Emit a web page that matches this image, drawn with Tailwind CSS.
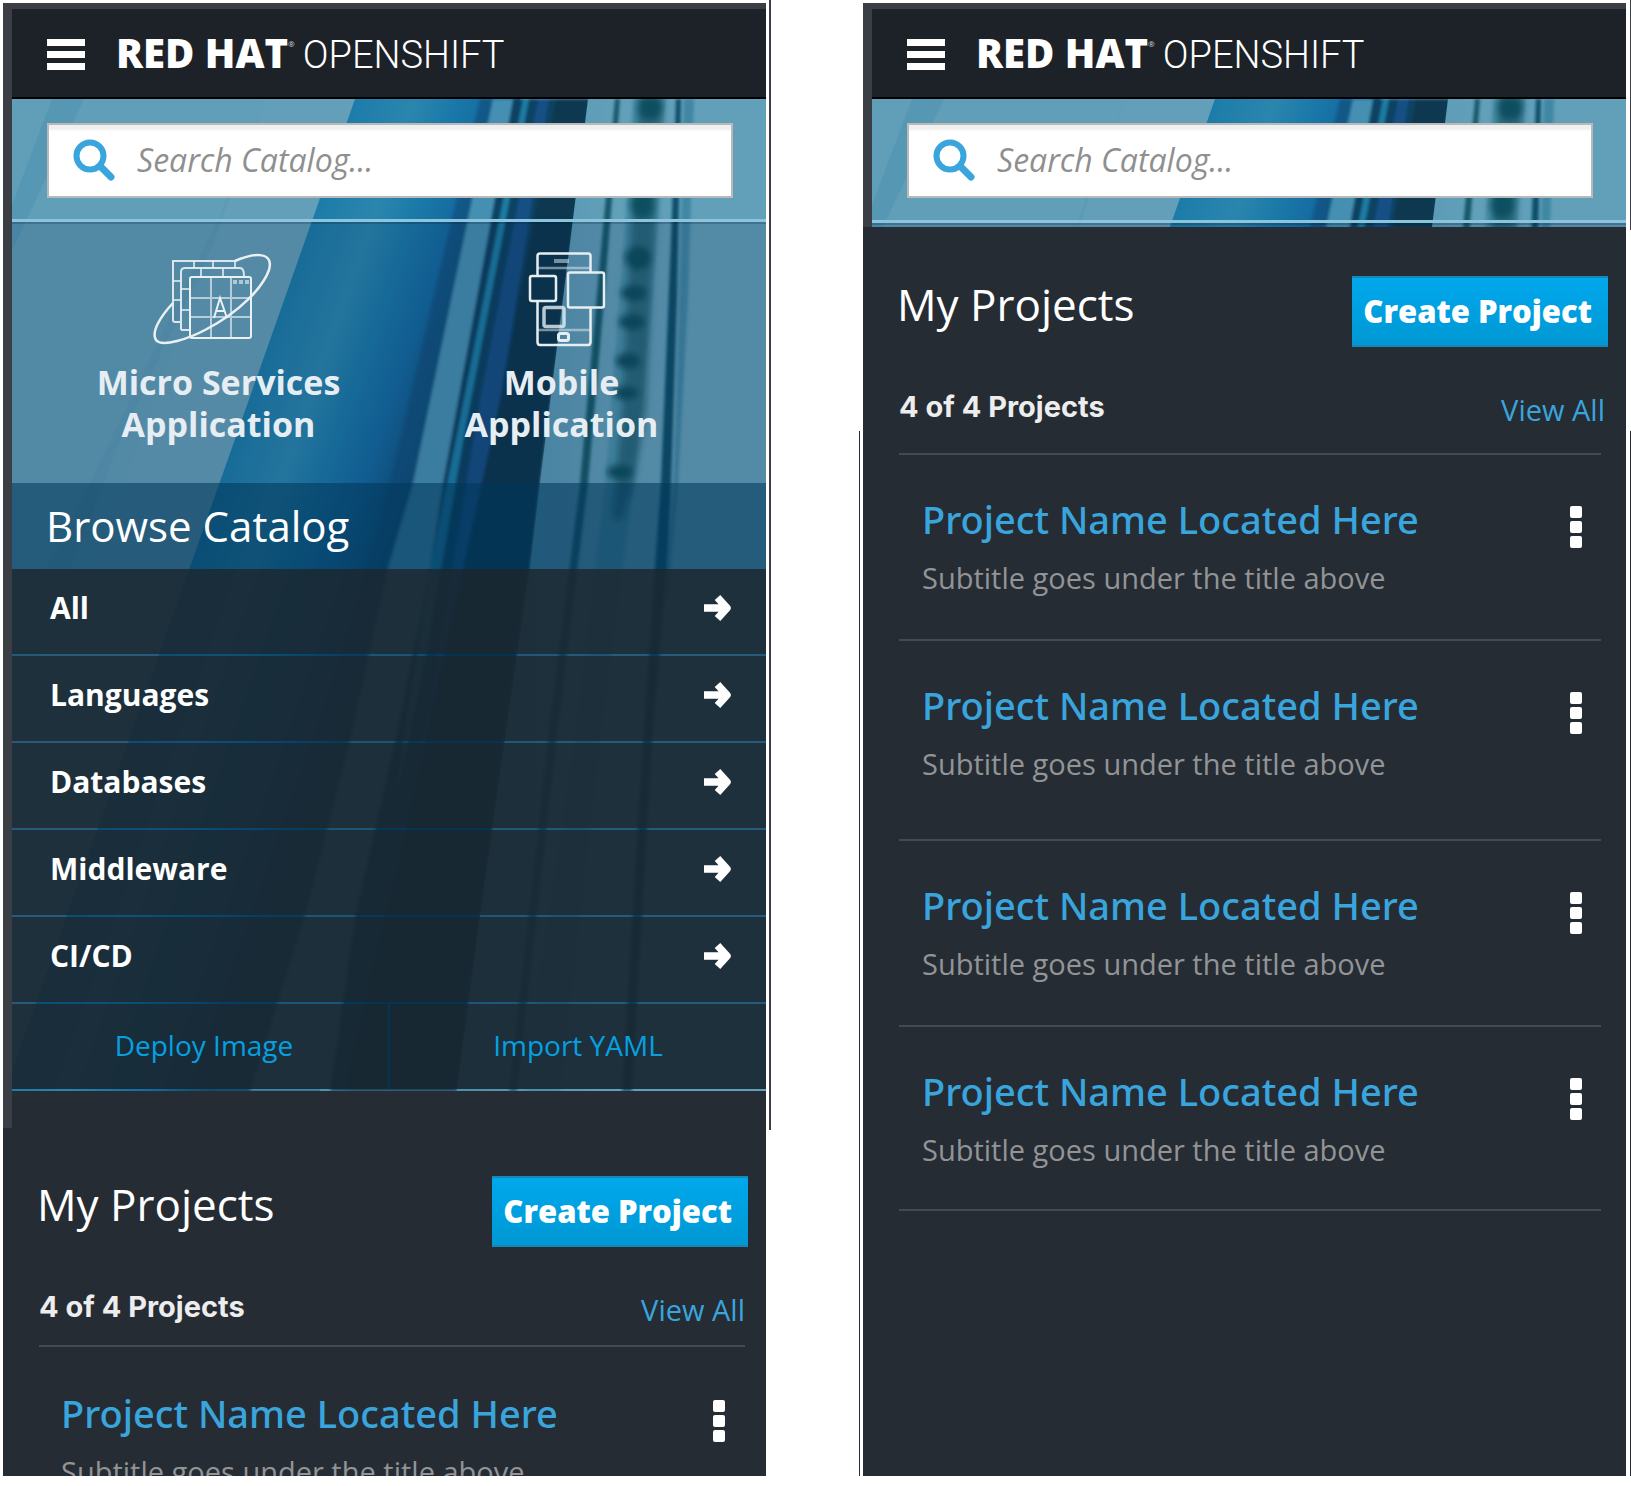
<!DOCTYPE html>
<html lang="en">
<head>
<meta charset="utf-8">
<meta name="viewport" content="width=device-width, initial-scale=1">
<title>Red Hat OpenShift</title>
<script src="https://cdn.jsdelivr.net/npm/@tailwindcss/browser@4"></script>
</head>
<body class="bg-white font-['Open_Sans',sans-serif]">

<!-- Shared artwork -->
<svg class="absolute size-0" aria-hidden="true">
  <defs>
    <linearGradient id="panel" gradientUnits="userSpaceOnUse" x1="355" y1="99" x2="535" y2="162">
      <stop offset="0" stop-color="#1c7ca9"/><stop offset=".3" stop-color="#2b86ae"/><stop offset=".5" stop-color="#1a79a8"/><stop offset=".7" stop-color="#156aa1"/><stop offset="1" stop-color="#0f4c70"/>
    </linearGradient>
    <linearGradient id="haze" x1="0" y1="0" x2="1" y2="0">
      <stop offset="0" stop-color="#4a90b0"/><stop offset=".5" stop-color="#629fb9"/><stop offset="1" stop-color="#629fb9"/>
    </linearGradient>
    <filter id="soft" x="-20%" y="-5%" width="140%" height="110%"><feGaussianBlur stdDeviation="1.5"/></filter>
    <filter id="softer" x="-50%" y="-5%" width="200%" height="110%"><feGaussianBlur stdDeviation="3"/></filter>
    <symbol id="backdrop" viewBox="12 99 754 992" preserveAspectRatio="none">
      <rect x="12" y="99" width="754" height="992" fill="#619eb8"/>
      <path d="M52 99H84L12 250V205Z" fill="#5698b4"/>
      <path d="M265 99H355L5 1091H-100Z" fill="#649fb9"/>
      <path d="M265 99L220 215L90 483L-20 700H20L120 440L215 240Z" fill="#4f92ae" opacity=".25"/>
      <path d="M355 99H520L320 1091H5Z" fill="url(#panel)"/>
      <g filter="url(#soft)">
        <path d="M480 99H496L413 483L388 568L350 741L305 916L250 1091H215L320 741L390 483Z" fill="#0f4f7c" opacity=".7"/>
        <path d="M493 99H515L443 483L430 568L395 741L355 916L330 1091H250L305 916L350 741L388 568L413 483Z" fill="#4490b2"/>
        <path d="M513 99H592L540 483L530 568L505 741L480 916L457 1091H330L355 916L395 741L430 568L443 483Z" fill="#0f4262"/>
        <path d="M523 99H529L465 430L425 660L395 800L430 568L458 430Z" fill="#1f7da5"/>
        <path d="M538 99H549L500 400L440 700L400 916H385L430 700L480 400Z" fill="#125084"/>
        <path d="M556 99H588L540 483L505 741L457 1091H345L425 741L500 400Z" fill="#0b394f"/>
      </g>
      <path d="M588 99H766V1091H457L480 916L505 741L530 568L540 483Z" fill="url(#haze)"/>
      <g filter="url(#soft)">
        <path d="M615 99H620L604 300L588 483L556 741L517 1091H509L548 741L580 483L600 260Z" fill="#155a6c"/>
        <path d="M633 99H665L652 300L634 483L600 741L560 1091H525L575 741L605 483L624 240Z" fill="#3b87a0" opacity=".6"/>
        <path d="M676 99H681L677 300L671 483L667 568L652 741L632 1091H622L643 741L655 568L661 483L671 240Z" fill="#10506a"/>
        <path d="M684 99H694L688 300L678 483L668 600H664L674 483L681 240Z" fill="#3f87a4"/>
      </g>
      <g filter="url(#softer)" fill="#105060">
        <path d="M638 95H664L654 260L652 280L646 410L634 483L622 520H612L622 410L630 240Z" opacity=".6"/>
        <ellipse cx="638" cy="258" rx="13" ry="12"/><ellipse cx="634" cy="293" rx="13" ry="8"/><ellipse cx="632" cy="322" rx="13" ry="8"/>
        <ellipse cx="628" cy="361" rx="12" ry="8"/><ellipse cx="626" cy="393" rx="12" ry="7"/><ellipse cx="620" cy="472" rx="13" ry="7"/><ellipse cx="650" cy="108" rx="13" ry="12"/><ellipse cx="642" cy="205" rx="12" ry="14"/>
      </g>
    </symbol>
    <symbol id="magnifier" viewBox="0 0 44 44">
      <circle cx="17" cy="17" r="13.5" fill="none" stroke="#39a5dc" stroke-width="6"/>
      <path d="M27 27L38 38" stroke="#39a5dc" stroke-width="7" stroke-linecap="round"/>
    </symbol>
    <symbol id="arrow" viewBox="0 0 28 30">
      <path d="M1 15H23M14.500 4.500L24 15L14.500 25.500" fill="none" stroke="#fff" stroke-width="7.500" stroke-linejoin="round"/>
    </symbol>
    <symbol id="kebab" viewBox="0 0 12 42">
      <g fill="#fff"><rect width="12" height="12" rx="2"/><rect y="15" width="12" height="12" rx="2"/><rect y="30" width="12" height="12" rx="2"/></g>
    </symbol>
  </defs>
</svg>

<div class="grid h-screen grid-cols-2 gap-x-[97px] pt-[3px] pr-[5px] pb-[10px] pl-[3px]">

  <!-- Catalog screen -->
  <main class="relative min-h-0">
    <div class="absolute -top-[3px] -right-[5px] h-[1130px] w-0.5 bg-[#3c4046]"></div>
    <div class="h-full overflow-hidden bg-[#262c34]">
      <div class="bg-[#3b3f45] pt-[6px] pl-[9px]">
        <header class="flex h-[90px] items-center border-b-2 border-black bg-[#1d2128] pt-0.5 pl-[35px]">
          <button class="flex w-[38px] flex-col gap-[5px]" aria-label="Menu">
            <span class="h-[7px] bg-white"></span><span class="h-[7px] bg-white"></span><span class="h-[7px] bg-white"></span>
          </button>
          <a href="#" class="ml-[31px] flex items-baseline text-white">
            <span class="text-[40px] leading-[44px] font-extrabold">RED HAT</span>
            <span class="self-start text-[8px] leading-[26px] text-gray-300">®</span>
            <span class="ml-2 font-['Roboto',sans-serif] text-[38px] leading-[44px] font-light">OPENSHIFT</span>
          </a>
        </header>
        <div class="relative isolate overflow-hidden pb-0.5">
          <svg class="absolute inset-0 -z-10 h-[992px] w-full" aria-hidden="true"><use href="#backdrop"/></svg>
          <form class="border-b-[3px] border-[#8bc5dc] pt-6 pr-[33px] pb-[21px] pl-[35px]">
            <label class="flex h-[75px] items-center border-2 border-[#b9b9b9] bg-white pl-6 shadow-[inset_0_6px_2px_-1px_#f0f0f0]">
              <svg class="size-[44px]" aria-hidden="true"><use href="#magnifier"/></svg>
              <input type="text" aria-label="Search catalog" placeholder="Search Catalog..." class="ml-5 min-w-0 flex-1 pb-0.5 text-[32px] leading-[44px] italic outline-none placeholder:text-[#8f8f8f]">
            </label>
          </form>
          <div class="grid grid-cols-2 border-t-2 border-[#00143c]/20 bg-[#00143c]/15 pt-[26px] pr-[33px] pb-[38px] pl-[35px]">
            <a href="#" class="flex flex-col items-center text-center text-[34px] leading-[42px] font-bold text-[#e6eef3]">
              <svg class="mb-[13px] h-[98px] w-[140px]" viewBox="149 250 140 98" fill="none" stroke="#e9f1f4" aria-hidden="true">
                <g stroke-width="2">
                  <path d="M235 261H173V320Q173 322 175 322H181M181 330V272Q181 268 185 268H240Q244 268 244 276M181 330H189" stroke-opacity=".9"/>
                  <path d="M194 261V268M213 261V268M235 261V268M201 269V277M223 269V277M173 281H181M173 300H181M181 289H190M181 310H190" stroke-opacity=".75"/>
                  <rect x="190" y="277" width="61" height="61" rx="2"/>
                  <path d="M211 277V338M231 277V338M190 298H251M190 317H251" stroke-opacity=".65"/>
                  <path d="M233 282H249" stroke-width="4" stroke-dasharray="4 2" stroke-opacity=".6"/>
                  <path d="M214 318L220 298L227 318M216 311H225"/>
                </g>
                <path d="M173 303C160 317 151 332 156 340C162 348 190 338 205 330C240 312 263 287 269 270C274 252 256 252 235 261" stroke-width="2.500"/>
              </svg>
              <span>Micro Services<br>Application</span>
            </a>
            <a href="#" class="flex flex-col items-center text-center text-[34px] leading-[42px] font-bold text-[#e6eef3]">
              <svg class="mb-[13px] h-[98px] w-[90px]" viewBox="516 250 90 98" fill="none" stroke="#e6eef2" stroke-width="2.500" aria-hidden="true">
                <path d="M536.500 275V256Q536.500 253.500 539 253.500H587Q589.500 253.500 589.500 256V272M536.500 301V342Q536.500 345 539 345H587Q589.500 345 589.500 342V308"/>
                <path d="M537 268H589M537 330H589" stroke-opacity=".5"/>
                <path d="M553 261H568" stroke-width="4" stroke-opacity=".5"/>
                <rect x="529" y="276" width="26" height="25" rx="2"/>
                <rect x="567" y="272.500" width="36" height="35" rx="2"/>
                <rect x="543" y="307.500" width="20" height="19" rx="2" stroke-width="3.500" stroke-opacity=".8"/>
                <rect x="557.500" y="333.500" width="10" height="7" rx="2" stroke-width="3"/>
              </svg>
              <span>Mobile<br>Application</span>
            </a>
          </div>
          <section class="bg-[#003255]/62">
            <h2 class="pl-[34px] text-[42px] leading-[86px] text-white">Browse Catalog</h2>
            <ul class="flex flex-col gap-0.5 pb-0.5 text-[30px] leading-[77px] font-bold text-white">
              <li><a href="#" class="flex items-center justify-between bg-[#1d252c]/80 pr-[35px] pb-2 pl-[38px]">All<svg class="h-[30px] w-7"><use href="#arrow"/></svg></a></li>
              <li><a href="#" class="flex items-center justify-between bg-[#1d252c]/80 pr-[35px] pb-2 pl-[38px]">Languages<svg class="h-[30px] w-7"><use href="#arrow"/></svg></a></li>
              <li><a href="#" class="flex items-center justify-between bg-[#1d252c]/80 pr-[35px] pb-2 pl-[38px]">Databases<svg class="h-[30px] w-7"><use href="#arrow"/></svg></a></li>
              <li><a href="#" class="flex items-center justify-between bg-[#1d252c]/80 pr-[35px] pb-2 pl-[38px]">Middleware<svg class="h-[30px] w-7"><use href="#arrow"/></svg></a></li>
              <li><a href="#" class="flex items-center justify-between bg-[#1d252c]/80 pr-[35px] pb-2 pl-[38px]">CI/CD<svg class="h-[30px] w-7"><use href="#arrow"/></svg></a></li>
            </ul>
            <div class="grid grid-cols-2 gap-0.5 text-center text-[28px] leading-[83px] text-[#06a0e0]">
              <a href="#" class="bg-[#1d252c]/80 pb-0.5 pl-2">Deploy Image</a>
              <a href="#" class="bg-[#1d252c]/80 pb-0.5">Import YAML</a>
            </div>
          </section>
        </div>
      </div>
      <section class="relative pt-[85px]">
        <div class="absolute top-0 left-0 h-[37px] w-[9px] bg-[#3b3f45]"></div>
        <div class="flex items-start justify-between pr-[18px] pl-[34px]">
          <h2 class="text-[44px] leading-[57px] text-white">My Projects</h2>
          <button class="border-y-2 border-[#1787b5] bg-linear-to-b from-[#00a8ec] to-[#0098d4] pr-4 pl-[11px] text-[31px] leading-[67px] font-extrabold text-white">Create Project</button>
        </div>
        <div class="mt-[43px] mr-[21px] ml-9 flex items-start justify-between border-b-2 border-[#444a51] pb-[15px]">
          <p class="font-['Inter',sans-serif] text-[29px] leading-[34px] font-bold text-[#ededed]">4 of 4 Projects</p>
          <a href="#" class="text-[29px] leading-[40px] text-[#39a5dc]">View All</a>
        </div>
        <ul class="mr-[21px] ml-9">
          <li class="flex items-start justify-between border-b-2 border-[#444a51] pt-10 pr-5 pb-[41px] pl-[22px]">
            <div>
              <a href="#" class="block font-['Noto_Sans',sans-serif] text-[38px] leading-[53px] font-medium text-[#39a5dc]">Project Name Located Here</a>
              <p class="mt-3 text-[29px] leading-[40px] text-[#929496]">Subtitle goes under the title above</p>
            </div>
            <button class="mt-[13px]" aria-label="Project actions"><svg class="h-[42px] w-3"><use href="#kebab"/></svg></button>
          </li>
        </ul>
      </section>
    </div>
  </main>

  <!-- Projects screen -->
  <section class="relative min-h-0">
    <div class="absolute -top-[3px] -right-[5px] h-[230px] w-px bg-[#3c4046]"></div>
    <div class="absolute top-[428px] -right-[5px] bottom-0 w-px bg-[#262c34]"></div>
    <div class="absolute top-[428px] -left-1 bottom-0 w-px bg-[#262c34]"></div>
    <div class="h-full overflow-hidden bg-[#262c34]">
      <div class="bg-[#3b3f45] pt-[6px] pl-[9px]">
        <header class="flex h-[90px] items-center border-b-2 border-black bg-[#1d2128] pt-0.5 pl-[35px]">
          <button class="flex w-[38px] flex-col gap-[5px]" aria-label="Menu">
            <span class="h-[7px] bg-white"></span><span class="h-[7px] bg-white"></span><span class="h-[7px] bg-white"></span>
          </button>
          <a href="#" class="ml-[31px] flex items-baseline text-white">
            <span class="text-[40px] leading-[44px] font-extrabold">RED HAT</span>
            <span class="self-start text-[8px] leading-[26px] text-gray-300">®</span>
            <span class="ml-2 font-['Roboto',sans-serif] text-[38px] leading-[44px] font-light">OPENSHIFT</span>
          </a>
        </header>
        <div class="relative isolate overflow-hidden">
          <svg class="absolute inset-0 -z-10 h-[992px] w-full" aria-hidden="true"><use href="#backdrop"/></svg>
          <form class="border-b-[3px] border-[#8bc5dc] pt-6 pr-[33px] pb-[22px] pl-[35px]">
            <label class="flex h-[75px] items-center border-2 border-[#b9b9b9] bg-white pl-6 shadow-[inset_0_6px_2px_-1px_#f0f0f0]">
              <svg class="size-[44px]" aria-hidden="true"><use href="#magnifier"/></svg>
              <input type="text" aria-label="Search catalog" placeholder="Search Catalog..." class="ml-5 min-w-0 flex-1 pb-0.5 text-[32px] leading-[44px] italic outline-none placeholder:text-[#8f8f8f]">
            </label>
          </form>
          <div class="h-1 border-t-2 border-[#00143c]/20 bg-[#00143c]/15"></div>
        </div>
      </div>
      <section class="pt-[49px]">
        <div class="flex items-start justify-between pr-[18px] pl-[34px]">
          <h2 class="text-[44px] leading-[57px] text-white">My Projects</h2>
          <button class="border-y-2 border-[#1787b5] bg-linear-to-b from-[#00a8ec] to-[#0098d4] pr-4 pl-[11px] text-[31px] leading-[67px] font-extrabold text-white">Create Project</button>
        </div>
        <div class="mt-[43px] mr-[21px] ml-9 flex items-start justify-between pb-[23px]">
          <p class="font-['Inter',sans-serif] text-[29px] leading-[34px] font-bold text-[#ededed]">4 of 4 Projects</p>
          <a href="#" class="text-[29px] leading-[40px] text-[#39a5dc]">View All</a>
        </div>
        <ul class="mr-[25px] ml-9 border-t-2 border-[#444a51]">
          <li class="flex items-start justify-between border-b-2 border-[#444a51] pt-[38px] pr-[19px] pb-[41px] pl-[23px]">
            <div>
              <a href="#" class="block font-['Noto_Sans',sans-serif] text-[38px] leading-[53px] font-medium text-[#39a5dc]">Project Name Located Here</a>
              <p class="mt-3 text-[29px] leading-[40px] text-[#929496]">Subtitle goes under the title above</p>
            </div>
            <button class="mt-[13px]" aria-label="Project actions"><svg class="h-[42px] w-3"><use href="#kebab"/></svg></button>
          </li>
          <li class="flex items-start justify-between border-b-2 border-[#444a51] pt-[38px] pr-[19px] pb-[55px] pl-[23px]">
            <div>
              <a href="#" class="block font-['Noto_Sans',sans-serif] text-[38px] leading-[53px] font-medium text-[#39a5dc]">Project Name Located Here</a>
              <p class="mt-3 text-[29px] leading-[40px] text-[#929496]">Subtitle goes under the title above</p>
            </div>
            <button class="mt-[13px]" aria-label="Project actions"><svg class="h-[42px] w-3"><use href="#kebab"/></svg></button>
          </li>
          <li class="flex items-start justify-between border-b-2 border-[#444a51] pt-[38px] pr-[19px] pb-[41px] pl-[23px]">
            <div>
              <a href="#" class="block font-['Noto_Sans',sans-serif] text-[38px] leading-[53px] font-medium text-[#39a5dc]">Project Name Located Here</a>
              <p class="mt-3 text-[29px] leading-[40px] text-[#929496]">Subtitle goes under the title above</p>
            </div>
            <button class="mt-[13px]" aria-label="Project actions"><svg class="h-[42px] w-3"><use href="#kebab"/></svg></button>
          </li>
          <li class="flex items-start justify-between border-b-2 border-[#444a51] pt-[38px] pr-[19px] pb-[39px] pl-[23px]">
            <div>
              <a href="#" class="block font-['Noto_Sans',sans-serif] text-[38px] leading-[53px] font-medium text-[#39a5dc]">Project Name Located Here</a>
              <p class="mt-3 text-[29px] leading-[40px] text-[#929496]">Subtitle goes under the title above</p>
            </div>
            <button class="mt-[13px]" aria-label="Project actions"><svg class="h-[42px] w-3"><use href="#kebab"/></svg></button>
          </li>
        </ul>
      </section>
    </div>
  </section>
</div>
</body>
</html>
